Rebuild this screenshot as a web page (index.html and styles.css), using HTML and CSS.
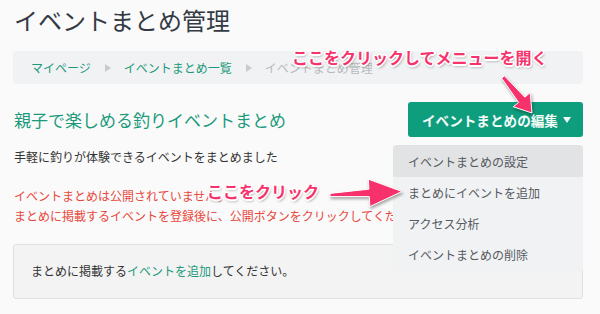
FILE: index.html
```html
<!DOCTYPE html>
<html lang="ja">
<head>
<meta charset="utf-8">
<title>イベントまとめ管理</title>
<link rel="stylesheet" href="styles.css">
</head>
<body>
<div class="page">
  <h1 class="title">イベントまとめ管理</h1>
  <nav class="crumbs">
    <a class="crumb-link">マイページ</a>
    <span class="sep"></span>
    <a class="crumb-link">イベントまとめ一覧</a>
    <span class="sep"></span>
    <span class="crumb-current">イベントまとめ管理</span>
  </nav>
  <div class="head-row">
    <h2 class="heading">親子で楽しめる釣りイベントまとめ</h2>
    <div class="dropdown">
      <button class="btn">イベントまとめの編集<span class="caret"></span></button>
      <ul class="menu">
        <li class="menu-item active">イベントまとめの設定</li>
        <li class="menu-item">まとめにイベントを追加</li>
        <li class="menu-item">アクセス分析</li>
        <li class="menu-item">イベントまとめの削除</li>
      </ul>
    </div>
  </div>
  <p class="desc">手軽に釣りが体験できるイベントをまとめました</p>
  <div class="warn">
    <p class="warn-line">イベントまとめは公開されていません。</p>
    <p class="warn-line">まとめに掲載するイベントを登録後に、公開ボタンをクリックしてください。</p>
  </div>
  <div class="notice">まとめに掲載する<a class="notice-link">イベントを追加</a>してください。</div>

  <svg class="arrows" width="600" height="314" viewBox="0 0 600 314">
    <polygon class="arrow" points="501.6,74.2 518.6,98.4 513.2,102.8 532,109 530.2,88.6 524.8,93.2 504.4,71.8"/>
    <polygon class="arrow" points="330.1,192.6 369.3,192.6 369.8,202.6 402,187.5 368.4,175.2 368.9,185.2 329.9,189.4"/>
  </svg>
  <span class="note note-top">ここをクリックしてメニューを開く</span>
  <span class="note note-mid">ここをクリック</span>
</div>
</body>
</html>
```

FILE: styles.css
```css
* { box-sizing: border-box; }
html, body { margin: 0; padding: 0; background: #fafafa; }
body {
  font-family: "Noto Sans CJK JP", "Noto Sans", sans-serif;
  color: #333;
  width: 600px;
  height: 314px;
  overflow: hidden;
}
.page {
  position: relative;
  width: 600px;
  height: 314px;
  padding: 0 17px 0 13px;
}
.title {
  margin: 4px 0 0 1px;
  font-size: 24px;
  line-height: 32px;
  font-weight: 400;
  color: #333a44;
}
.crumbs {
  margin-top: 15px;
  height: 33px;
  background: #f1f2f4;
  border-radius: 4px;
  display: flex;
  align-items: center;
  padding-left: 18px;
  font-size: 12px;
  line-height: 16px;
}
.crumb-link { color: #1c9a7b; text-decoration: none; }
.crumb-current { color: #b8babd; }
.sep {
  width: 0;
  height: 0;
  border-left: 6px solid #c8cacd;
  border-top: 4px solid transparent;
  border-bottom: 4px solid transparent;
  margin: 0 13px 0 14px;
}
.head-row {
  margin-top: 18px;
  display: flex;
  align-items: center;
  justify-content: space-between;
}
.heading {
  margin: 0 0 0 1px;
  font-size: 17px;
  line-height: 24px;
  font-weight: 400;
  color: #1b9a7c;
}
.dropdown { position: relative; }
.btn {
  display: flex;
  align-items: center;
  width: 175px;
  height: 35px;
  padding: 0 0 0 14px;
  border: none;
  border-radius: 3px;
  background: #0e9e7d;
  color: #f4fbf9;
  font-family: "Noto Sans CJK JP", "Noto Sans", sans-serif;
  font-size: 13.6px;
  font-weight: 700;
  line-height: 20px;
}
.caret {
  width: 0;
  height: 0;
  margin-left: 5px;
  border-top: 6px solid #f4fbf9;
  border-left: 4px solid transparent;
  border-right: 4px solid transparent;
}
.menu {
  position: absolute;
  z-index: 2;
  top: 43px;
  right: 0;
  width: 190px;
  margin: 0;
  padding: 0 0 2px;
  list-style: none;
  background: #f1f2f4;
  border-radius: 4px;
  overflow: hidden;
}
.menu-item {
  height: 31px;
  padding-left: 15px;
  display: flex;
  align-items: center;
  font-size: 12px;
  color: #555a60;
}
.menu-item.active { background: #e1e3e5; height: 32px; }
.desc {
  margin: 10px 0 0 1px;
  font-size: 12px;
  line-height: 20px;
  color: #333;
}
.warn { margin-top: 19px; margin-left: 1px; }
.warn-line {
  margin: 0;
  font-size: 12px;
  line-height: 20px;
  color: #e8483d;
  white-space: nowrap;
}
.notice {
  margin-top: 18px;
  padding: 16px 17px 17px;
  background: #f3f3f3;
  border: 1px solid #e0e0e0;
  border-radius: 3px;
  font-size: 12px;
  line-height: 20px;
  color: #333;
}
.notice-link { color: #1c9a7b; }
.arrows {
  position: absolute;
  left: 0;
  top: 0;
  z-index: 5;
  pointer-events: none;
  overflow: visible;
}
.arrow {
  fill: #f7316c;
  stroke: #fff;
  stroke-width: 1;
  stroke-linejoin: round;
  filter: drop-shadow(1px 2px 1.5px rgba(0,0,0,0.35));
}
.note {
  position: absolute;
  z-index: 6;
  font-size: 16px;
  line-height: 20px;
  font-weight: 700;
  color: #f5346e;
  white-space: nowrap;
  text-shadow: -1px -1px 0 #fff, 1px -1px 0 #fff, -1px 1px 0 #fff, 1px 1px 0 #fff,
    0 -1.5px 0 #fff, 0 1.5px 0 #fff, -1.5px 0 0 #fff, 1.5px 0 0 #fff,
    1px 2px 3px rgba(0,0,0,0.45);
}
.note-top { left: 292px; top: 43px; }
.note-mid { left: 207px; top: 177px; }
```
